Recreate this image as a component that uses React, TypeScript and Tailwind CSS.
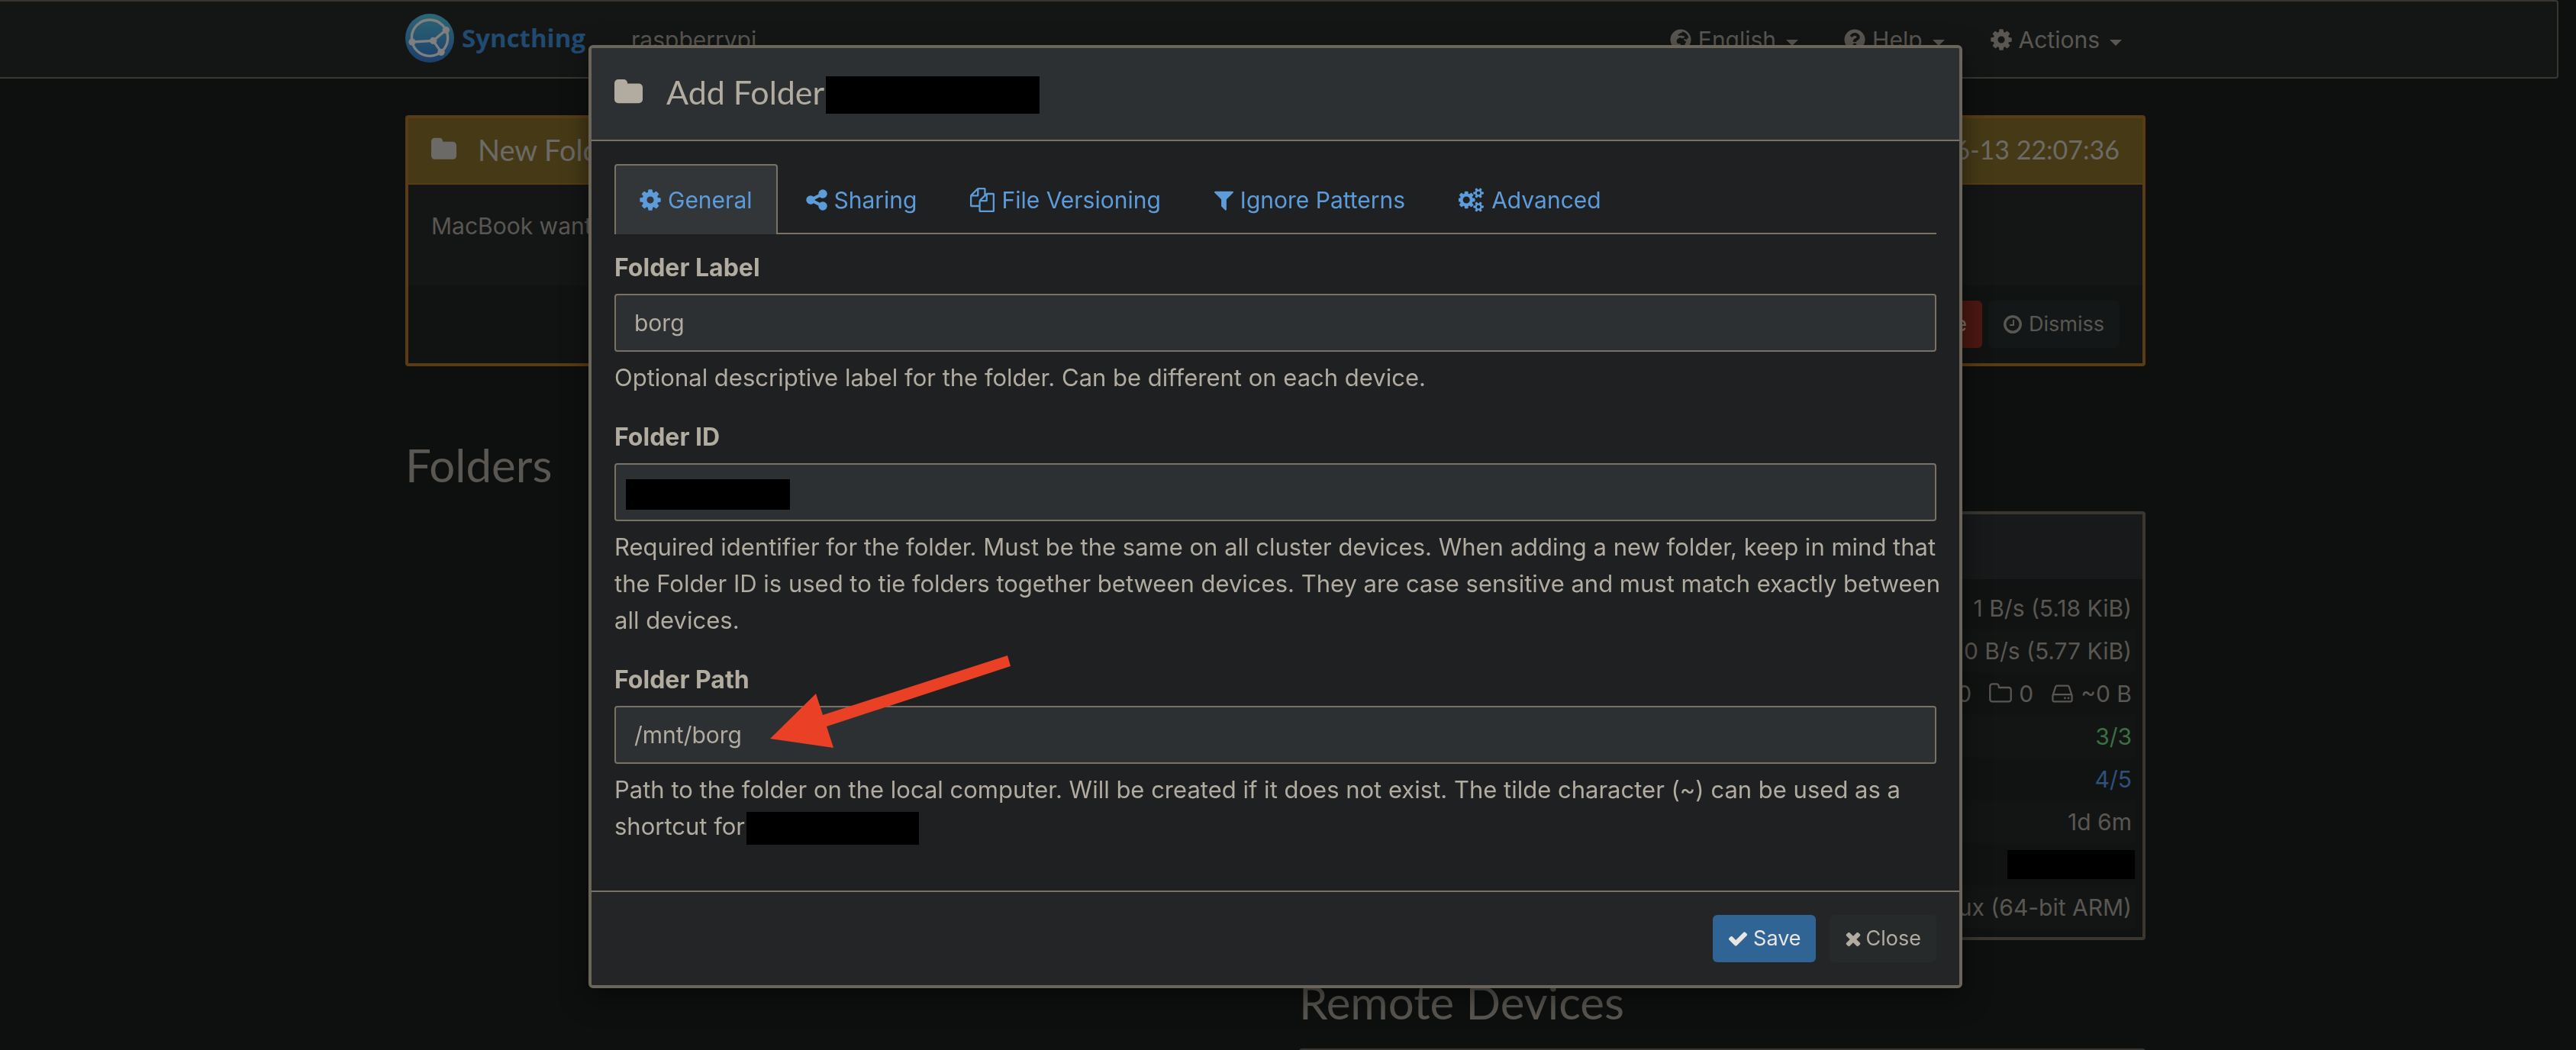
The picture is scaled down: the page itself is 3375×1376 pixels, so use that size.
import type { ReactNode } from "react";
import { FaGlobeAfrica, FaQuestionCircle } from "react-icons/fa";

const GEAR =
  "M1152 896q0-106-75-181t-181-75-181 75-75 181 75 181 181 75 181-75 75-181zm512-109v222q0 12-8 23t-20 13l-185 28q-19 54-39 91 35 50 107 138 10 12 10 25t-9 23q-27 37-99 108t-94 71q-12 0-26-9l-138-108q-44 23-91 38-16 136-29 186-7 28-36 28h-222q-14 0-24.5-8.5t-11.5-21.5l-28-184q-49-16-90-37l-141 107q-10 9-25 9-14 0-25-11-126-114-165-168-7-10-7-23 0-12 8-23 15-21 51-66.5t54-70.5q-27-50-41-99l-183-27q-13-2-21-12.5t-8-23.5v-222q0-12 8-23t19-13l186-28q14-46 39-92-40-57-107-138-10-12-10-24 0-10 9-23 26-36 98.5-107.5t94.5-71.5q13 0 26 10l138 107q44-23 91-38 16-136 29-186 7-28 36-28h222q14 0 24.5 8.5t11.5 21.5l28 184q49 16 90 37l142-107q9-9 24-9 13 0 25 10 129 119 165 170 7 8 7 22 0 12-8 23-15 21-51 66.5t-54 70.5q26 50 41 98l183 28q13 2 21 12.5t8 23.5z";
const SHARE =
  "M1344 1024q133 0 226.5 93.5t93.5 226.5-93.5 226.5-226.5 93.5-226.5-93.5-93.5-226.5q0-12 2-34l-360-180q-92 86-218 86-133 0-226.5-93.5t-93.5-226.5 93.5-226.5 226.5-93.5q126 0 218 86l360-180q-2-22-2-34 0-133 93.5-226.5t226.5-93.5 226.5 93.5 93.5 226.5-93.5 226.5-226.5 93.5q-126 0-218-86l-360 180q2 22 2 34t-2 34l360 180q92-86 218-86z";
const FILES =
  "M1696 384q40 0 68 28t28 68v1216q0 40-28 68t-68 28h-960q-40 0-68-28t-28-68v-288h-544q-40 0-68-28t-28-68v-672q0-40 20-88t48-76l408-408q28-28 76-48t88-20h416q40 0 68 28t28 68v328q68-40 128-40h416zm-544 213l-299 299h299v-299zm-640-384l-299 299h299v-299zm196 647l316-316v-416h-384v416q0 40-28 68t-68 28h-416v640h512v-256q0-40 20-88t48-76zm956 804v-1152h-384v416q0 40-28 68t-68 28h-416v640h896z";
const FILTER =
  "M1595 295q17 41-14 70l-493 493v742q0 42-39 59-13 5-25 5-27 0-45-19l-256-256q-19-19-19-45v-486l-493-493q-31-29-14-70 17-39 59-39h1280q42 0 59 39z";
const BIG_GEAR =
  "M832 896q0-106-75-181t-181-75-181 75-75 181 75 181 181 75 181-75 75-181zm384-91v185q0 10-7 19.5t-16 10.5l-155 24q-11 35-32 76 34 48 90 115 7 11 7 20 0 12-7 19-23 30-82.5 89.5t-78.5 59.5q-11 0-21-7l-115-90q-37 19-77 31-11 108-23 155-7 24-30 24h-186q-11 0-20-7.5t-10-17.5l-23-153q-34-10-75-31l-118 89q-7 7-20 7-11 0-21-8-144-133-144-160 0-9 7-19 10-14 41-53t47-61q-23-44-35-82l-152-24q-10-1-17-9.5t-7-19.5v-185q0-10 7-19.5t16-10.5l155-24q11-35 32-76-34-48-90-115-7-11-7-20 0-12 7-20 22-30 82-89t79-59q11 0 21 7l115 90q34-18 77-32 11-108 23-154 7-24 30-24h186q11 0 20 7.5t10 17.5l23 153q34 10 75 31l118-89q8-7 20-7 11 0 21 8 144 133 144 160 0 8-7 19-12 16-42 54t-45 60q23 48 34 82l152 23q10 2 17 10.5t7 19.5z";
const SMALL_GEAR =
  "M1600 1408q0-52-38-90t-90-38-90 38-38 90q0 53 37.5 90.5t90.5 37.5 90.5-37.5 37.5-90.5zm256-70v140q0 16-149 31-12 27-30 52 51 113 51 138 0 4-4 7-122 71-124 71-8 0-46-47t-52-68q-20 2-30 2t-30-2q-14 21-52 68t-46 47q-2 0-124-71-4-3-4-7 0-25 51-138-18-25-30-52-149-15-149-31v-140q0-16 149-31 13-29 30-52-51-113-51-138 0-4 4-7 4-2 35-20t59-34 30-16q8 0 46 46.5t52 67.5q20-2 30-2t30 2q51-71 92-112l6-2q4 0 124 70 4 3 4 7 0 25-51 138 17 23 30 52 149 15 149 31z";
const FOLDER =
  "M1728 608v704q0 92-66 158t-158 66h-1216q-92 0-158-66t-66-158v-960q0-92 66-158t158-66h320q92 0 158 66t66 158v32h672q92 0 158 66t66 158z";
const FOLDER_OPEN =
  "M1600 1312v-704q0-40-28-68t-68-28h-704q-40 0-68-28t-28-68v-64q0-40-28-68t-68-28h-320q-40 0-68 28t-28 68v960q0 40 28 68t68 28h1216q40 0 68-28t28-68zm128-704v704q0 92-66 158t-158 66h-1216q-92 0-158-66t-66-158v-960q0-92 66-158t158-66h320q92 0 158 66t66 158v32h672q92 0 158 66t66 158z";
const DISK =
  "M1168 1216q0 33-23.5 56.5t-56.5 23.5-56.5-23.5-23.5-56.5 23.5-56.5 56.5-23.5 56.5 23.5 23.5 56.5zm256 0q0 33-23.5 56.5t-56.5 23.5-56.5-23.5-23.5-56.5 23.5-56.5 56.5-23.5 56.5 23.5 23.5 56.5zm112 160v-320q0-13-9.5-22.5t-22.5-9.5h-1216q-13 0-22.5 9.5t-9.5 22.5v320q0 13 9.5 22.5t22.5 9.5h1216q13 0 22.5-9.5t9.5-22.5zm-1230-480h1180l-157-482q-4-13-16-21.5t-26-8.5h-782q-14 0-26 8.5t-16 21.5zm1358 160v320q0 66-47 113t-113 47h-1216q-66 0-113-47t-47-113v-320q0-25 16-75l197-606q17-53 63-86t101-33h782q55 0 101 33t63 86l197 606q16 50 16 75z";
const CHECK =
  "M1671 566q0 40-28 68l-724 724-136 136q-28 28-68 28t-68-28l-136-136-362-362q-28-28-28-68t28-68l136-136q28-28 68-28t68 28l294 295 656-657q28-28 68-28t68 28l136 136q28 28 28 68z";
const CROSS =
  "M1490 1322q0 40-28 68l-136 136q-28 28-68 28t-68-28l-294-294-294 294q-28 28-68 28t-68-28l-136-136q-28-28-28-68t28-68l294-294-294-294q-28-28-28-68t28-68l136-136q28-28 68-28t68 28l294 294 294-294q28-28 68-28t68 28l136 136q28 28 28 68t-28 68l-294 294 294 294q28 28 28 68z";
const CLOCK =
  "M1024 544v448q0 14-9 23t-23 9h-320q-14 0-23-9t-9-23v-64q0-14 9-23t23-9h224v-352q0-14 9-23t23-9h64q14 0 23 9t9 23zm416 352q0-148-73-273t-198-198-273-73-273 73-198 198-73 273 73 273 198 198 273 73 273-73 198-198 73-273zm224 0q0 209-103 385.5t-279.5 279.5-385.5 103-385.5-103-279.5-279.5-103-385.5 103-385.5 279.5-279.5 385.5-103 385.5 103 279.5 279.5 103 385.5z";

const FULL = "0 0 1792 1792";
const TRIMMED = "128 0 1536 1792";
const NARROW = "192 0 1408 1792";
const WIDE = "64 0 1664 1792";

function Icon({ d, box = FULL, className = "size-8" }: { d: string; box?: string; className?: string }) {
  return (
    <svg viewBox={box} className={`shrink-0 fill-current ${className}`} aria-hidden="true">
      <path d={d} />
    </svg>
  );
}

function GearsIcon() {
  return (
    <svg viewBox="0 0 1920 1792" className="h-8 w-[34px] shrink-0 fill-current" aria-hidden="true">
      <path d={BIG_GEAR} />
      <path d={SMALL_GEAR} />
      <path d={SMALL_GEAR} transform="translate(0 -1024)" />
    </svg>
  );
}

function Logo() {
  return (
    <svg viewBox="0 0 192 192" className="size-16" aria-hidden="true">
      <defs>
        <linearGradient id="logo" x1="0" y1="0" x2="0" y2="1">
          <stop offset="0" stopColor="#2d6674" />
          <stop offset="1" stopColor="#1c3f6d" />
        </linearGradient>
      </defs>
      <circle cx="96" cy="96" r="96" fill="url(#logo)" />
      <g fill="none" stroke="#7f7f7f" strokeWidth="10">
        <circle cx="96" cy="95" r="71" />
        <path d="M27 111 110 106 160 64M110 106 141 151" />
      </g>
      <g fill="#7f7f7f">
        <circle cx="160" cy="64" r="14" />
        <circle cx="27" cy="111" r="14" />
        <circle cx="110" cy="106" r="14" />
        <circle cx="141" cy="151" r="14" />
      </g>
    </svg>
  );
}

function NavItem({ icon, label }: { icon: ReactNode; label: string }) {
  return (
    <button className="flex items-center gap-[9px]">
      {icon}
      {label}
      <span className="mt-2 ml-1 border-x-8 border-t-8 border-x-transparent border-t-current" />
    </button>
  );
}

function Redacted({ className }: { className: string }) {
  return <span className={`bg-black ${className}`} />;
}

function Tab({ icon, label, active = false }: { icon: ReactNode; label: string; active?: boolean }) {
  return (
    <button
      role="tab"
      aria-selected={active}
      className={`-mb-0.5 flex h-[92px] items-center gap-[9px] rounded-t-sm border-2 border-b-0 px-[31px] ${
        active ? "border-[#7a7165] bg-[#323638]" : "border-transparent"
      }`}
    >
      {icon}
      {label}
    </button>
  );
}

function Field({ id, label, value, help, children }: { id: string; label: string; value: string; help: ReactNode; children?: ReactNode }) {
  return (
    <div className="mb-[30px]">
      <label htmlFor={id} className="mb-2.5 block text-[32px] leading-12 font-bold">
        {label}
      </label>
      <div className="relative">
        <input
          id={id}
          defaultValue={value}
          className="block h-[76px] w-full rounded-sm border-2 border-[#7a7165] bg-[#2d3032] px-6 outline-none"
        />
        {children}
      </div>
      <p className="mt-2.5 -mr-4 text-[31px] leading-12">{help}</p>
    </div>
  );
}

const stats: [string, ReactNode][] = [
  ["Download Rate", "1 B/s (5.18 KiB)"],
  ["Upload Rate", "0 B/s (5.77 KiB)"],
  [
    "Local State (Total)",
    <span className="flex items-center justify-end gap-2">
      0
      <Icon d={FOLDER_OPEN} className="ml-3.5 size-8" />
      0
      <Icon d={DISK} className="ml-3.5 size-8" />
      ~0 B
    </span>,
  ],
  ["Listeners", <span className="text-[#3b6e42]">3/3</span>],
  ["Discovery", <span className="text-[#2d517b]">4/5</span>],
  ["Uptime", "1d 6m"],
  ["Identification", <Redacted className="-mr-1 ml-auto block h-[38px] w-[167px]" />],
  ["Version", "Linux (64-bit ARM)"],
];

export default function App() {
  return (
    <div className="h-screen overflow-hidden bg-[#0e100f] font-[Inter,sans-serif] text-[30px] leading-12 text-[#5a5752]">
      <header className="mr-[23px] rounded-r-sm border-y-2 border-r-2 border-[#3a3731] bg-[#141616] pr-2">
        <nav className="mx-auto flex h-[99px] max-w-[2280px] items-center">
          <a href="#" className="-mt-1 flex items-center gap-2.5 font-['Open_Sans',sans-serif] text-[33px] font-bold text-[#204a70]">
            <Logo />
            Syncthing
          </a>
          <span className="ml-[60px]">raspberrypi</span>
          <div className="mr-[31px] ml-auto flex gap-[60px]">
            <NavItem icon={<FaGlobeAfrica className="size-7" />} label="English" />
            <NavItem icon={<FaQuestionCircle className="size-7" />} label="Help" />
            <NavItem icon={<Icon d={GEAR} box={TRIMMED} className="h-8 w-7" />} label="Actions" />
          </div>
        </nav>
      </header>

      <main className="mr-[33px]">
        <div className="mx-auto max-w-[2280px] pt-12">
          <section className="rounded-sm border-4 border-[#593c15] bg-[#141616]">
            <h2 className="flex h-[87px] items-center border-b-2 border-[#593c15] bg-[#463a16] px-[30px] pb-1 font-[Lato,sans-serif] text-[38px] text-[#6c6a67]">
              <Icon d={FOLDER} box={WIDE} className="mr-7 h-9 w-[33px]" />
              New Folder
              <time className="ml-auto text-[34px]">2021-06-13 22:07:36</time>
            </h2>
            <p className="px-[30px] pt-[30px] pb-[54px]">MacBook wants to share folder &quot;borg&quot;.</p>
            <div className="flex justify-end gap-2 bg-[#111313] py-5 pr-[30px] text-[27px]">
              <button className="h-[62px] rounded-md bg-[#4d1812] px-5 text-[#797370]">Ignore</button>
              <button className="flex h-[62px] items-center gap-[9px] rounded-md bg-[#141717] px-5">
                <Icon d={CLOCK} box={TRIMMED} className="h-7 w-6" />
                Dismiss
              </button>
            </div>
          </section>

          <div className="grid grid-cols-2 gap-[62px] pt-12">
            <h2 className="mt-[51px] font-[Lato,sans-serif] text-[60px] leading-[60px]">Folders</h2>
            <div>
              <h2 className="mt-[51px] mb-[31px] font-[Lato,sans-serif] text-[60px] leading-[60px]">This Device</h2>
              <section className="rounded-sm border-4 border-[#3a3731] bg-[#111313] pb-[11px]">
                <h3 className="flex h-[85px] items-center bg-[#17191a] px-[30px] font-[Lato,sans-serif] text-[38px]">raspberrypi</h3>
                <div className="px-2.5 pt-2.5">
                  <table className="w-full">
                    <tbody>
                      {stats.map(([name, value]) => (
                        <tr key={name} className="h-14 odd:bg-[#111313] even:bg-[#131515]">
                          <th className="pl-1.5 text-left font-normal">{name}</th>
                          <td className="pr-1 text-right">{value}</td>
                        </tr>
                      ))}
                    </tbody>
                  </table>
                </div>
              </section>
              <h2 className="mt-[51px] mb-[31px] font-[Lato,sans-serif] text-[60px] leading-[60px]">Remote Devices</h2>
              <section className="h-24 rounded-sm border-4 border-[#3a3731] bg-[#17191a]" />
            </div>
          </div>
        </div>
      </main>

      <div className="fixed inset-0 flex items-start justify-center pt-[59px] pr-[33px] text-[#b1aba0]">
        <div
          role="dialog"
          aria-labelledby="dialog-title"
          className="w-[1800px] max-w-full overflow-hidden rounded-md border-4 border-[#6b6458] bg-[#1f2022] shadow-[0_12px_34px_rgba(0,0,0,0.5)]"
        >
          <header className="flex h-[122px] items-center border-b-2 border-[#7a7165] bg-[#2d3032] px-[30px] pb-1">
            <Icon d={FOLDER} box={WIDE} className="mr-[31px] h-10 w-[37px]" />
            <h1 id="dialog-title" className="font-[Lato,sans-serif] text-[43px]">
              Add Folder
            </h1>
            <Redacted className="mt-1.5 ml-0.5 h-[49px] w-[280px]" />
          </header>

          <div className="p-[30px]">
            <div role="tablist" className="mb-5 flex gap-1 border-b-2 border-[#7a7165] text-[#5c9cda]">
              <Tab active icon={<Icon d={GEAR} box={TRIMMED} className="h-8 w-7" />} label="General" />
              <Tab icon={<Icon d={SHARE} box={TRIMMED} className="h-8 w-7" />} label="Sharing" />
              <Tab icon={<Icon d={FILES} />} label="File Versioning" />
              <Tab icon={<Icon d={FILTER} box={NARROW} className="h-8 w-[25px]" />} label="Ignore Patterns" />
              <Tab icon={<GearsIcon />} label="Advanced" />
            </div>

            <Field
              id="folder-label"
              label="Folder Label"
              value="borg"
              help="Optional descriptive label for the folder. Can be different on each device."
            />
            <Field
              id="folder-id"
              label="Folder ID"
              value=""
              help="Required identifier for the folder. Must be the same on all cluster devices. When adding a new folder, keep in mind that the Folder ID is used to tie folders together between devices. They are case sensitive and must match exactly between all devices."
            >
              <Redacted className="absolute top-[21px] left-[15px] h-10 w-[215px]" />
            </Field>
            <Field
              id="folder-path"
              label="Folder Path"
              value="/mnt/borg"
              help={
                <>
                  Path to the folder on the local computer. Will be created if it does not exist. The tilde character (~) can be used as a
                  shortcut for
                  <Redacted className="mt-[5px] ml-0.5 inline-block h-[43px] w-[226px] align-top" />
                </>
              }
            >
              <svg viewBox="0 0 315 122" className="pointer-events-none absolute -top-[67px] left-[204px] w-[315px] fill-[#ea4025]" aria-hidden="true">
                <path d="M0 110 60 51 69 79 311 1 315 15 74 94 83 122Z" />
              </svg>
            </Field>
          </div>

          <footer className="flex justify-end gap-[18px] border-t-2 border-[#7a7165] bg-[#242527] p-[30px] text-[27px]">
            <button className="flex h-[62px] items-center gap-1.5 rounded-md bg-[#306495] px-[19px] text-[#e9e6e2]">
              <Icon d={CHECK} className="size-7" />
              Save
            </button>
            <button className="flex h-[62px] items-center gap-1.5 rounded-md bg-[#272a2b] px-5">
              <Icon d={CROSS} box={NARROW} className="h-7 w-[22px]" />
              Close
            </button>
          </footer>
        </div>
      </div>
    </div>
  );
}
